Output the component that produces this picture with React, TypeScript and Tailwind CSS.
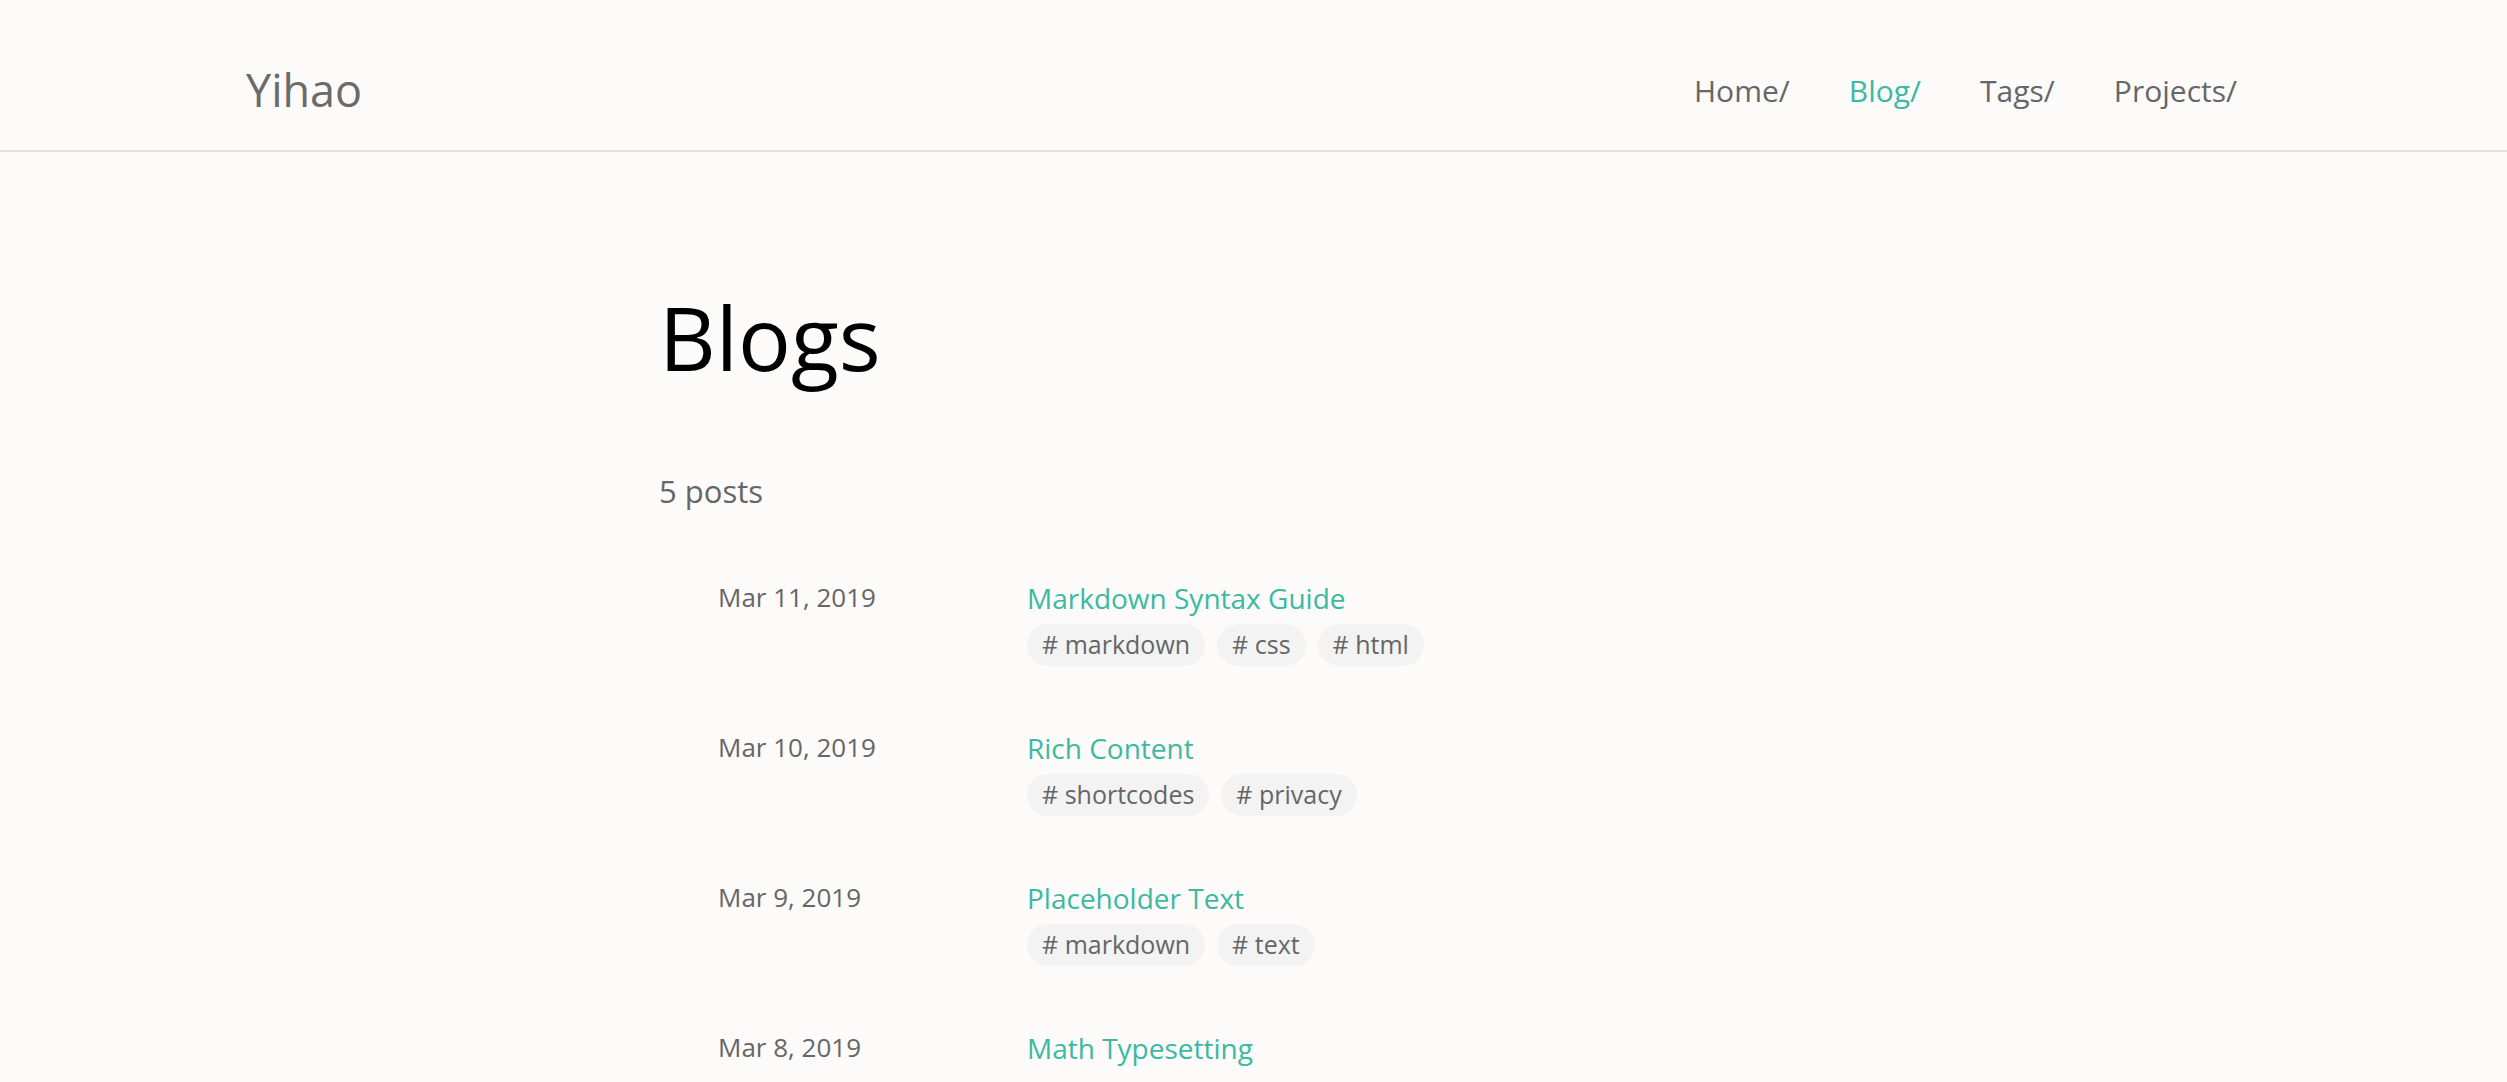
import React from 'react'

type Post = {
  date: string
  title: string
  tags: string[]
}

const posts: Post[] = [
  { date: 'Mar 11, 2019', title: 'Markdown Syntax Guide', tags: ['markdown', 'css', 'html'] },
  { date: 'Mar 10, 2019', title: 'Rich Content', tags: ['shortcodes', 'privacy'] },
  { date: 'Mar 9, 2019', title: 'Placeholder Text', tags: ['markdown', 'text'] },
  { date: 'Mar 8, 2019', title: 'Math Typesetting', tags: [] },
  { date: 'Mar 5, 2019', title: 'Emoji Support', tags: ['emoji'] },
]

const navItems = ['Home/', 'Blog/', 'Tags/', 'Projects/']

function Header() {
  return (
    <header className="h-[152px] pt-[32px] border-b-2 border-[#e2e1e0] flex items-center justify-between pl-[246px] pr-[270px]">
      <a href="#" className="text-[45px] leading-none font-medium text-[#6b6b6b] pb-[4px]">
        Yihao
      </a>
      <nav className="flex items-center gap-[59px] text-[30px] leading-none text-[#666]">
        {navItems.map((item) => (
          <a
            key={item}
            href="#"
            className={item === 'Blog/' ? 'text-[#3bb9a1]' : 'text-[#666]'}
          >
            {item}
          </a>
        ))}
      </nav>
    </header>
  )
}

function PostRow({ post }: { post: Post }) {
  return (
    <li className="flex items-start">
      <span className="w-[309px] shrink-0 text-[26px] leading-none text-[#666]">
        {post.date}
      </span>
      <div className="flex flex-col gap-3">
        <a href="#" className="text-[28px] leading-none text-[#3bb9a1]">
          {post.title}
        </a>
        {post.tags.length > 0 && (
          <div className="flex gap-3">
            {post.tags.map((tag) => (
              <a
                key={tag}
                href="#"
                className="h-[42px] px-[15px] rounded-full bg-[#f3f3f3] text-[25px] text-[#666] flex items-center"
              >
                # {tag}
              </a>
            ))}
          </div>
        )}
      </div>
    </li>
  )
}

export default function App() {
  return (
    <div className="min-h-screen bg-[#fcfbfa] font-['Open_Sans','Noto_Sans',sans-serif]">
      <Header />
      <main className="pl-[659px] pb-24">
        <h1 className="mt-[141px] text-[88px] leading-none text-black">Blogs</h1>
        <p className="mt-[95px] text-[31px] leading-none text-[#666]">5 posts</p>
        <ul className="mt-[77px] pl-[59px] flex flex-col gap-[68px]">
          {posts.map((post) => (
            <PostRow key={post.title} post={post} />
          ))}
        </ul>
      </main>
    </div>
  )
}
